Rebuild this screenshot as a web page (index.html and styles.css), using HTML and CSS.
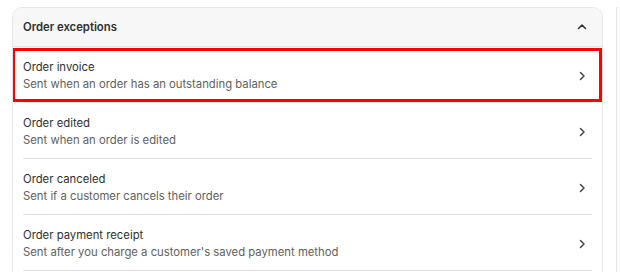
FILE: index.html
```html
<!DOCTYPE html>
<html>
<head>
<meta charset="utf-8">
<link rel="stylesheet" href="styles.css">
</head>
<body>
<div class="page">
  <section class="card">
    <header class="card-head">
      <span class="head-title">Order exceptions</span>
      <svg class="chev" viewBox="0 0 16 16"><path d="M4.5 9.5 8 6l3.5 3.5" fill="none" stroke="#303030" stroke-width="1.5" stroke-linecap="round" stroke-linejoin="round"/></svg>
    </header>
    <div class="list">
      <div class="row">
        <div class="text">
          <div class="title">Order invoice</div>
          <div class="sub">Sent when an order has an outstanding balance</div>
        </div>
        <svg class="chev" viewBox="0 0 16 16"><path d="M6.5 4.5 10 8l-3.5 3.5" fill="none" stroke="#4a4a4a" stroke-width="1.5" stroke-linecap="round" stroke-linejoin="round"/></svg>
      </div>
      <div class="row">
        <div class="text">
          <div class="title">Order edited</div>
          <div class="sub">Sent when an order is edited</div>
        </div>
        <svg class="chev" viewBox="0 0 16 16"><path d="M6.5 4.5 10 8l-3.5 3.5" fill="none" stroke="#4a4a4a" stroke-width="1.5" stroke-linecap="round" stroke-linejoin="round"/></svg>
      </div>
      <div class="row">
        <div class="text">
          <div class="title">Order canceled</div>
          <div class="sub">Sent if a customer cancels their order</div>
        </div>
        <svg class="chev" viewBox="0 0 16 16"><path d="M6.5 4.5 10 8l-3.5 3.5" fill="none" stroke="#4a4a4a" stroke-width="1.5" stroke-linecap="round" stroke-linejoin="round"/></svg>
      </div>
      <div class="row">
        <div class="text">
          <div class="title">Order payment receipt</div>
          <div class="sub">Sent after you charge a customer's saved payment method</div>
        </div>
        <svg class="chev" viewBox="0 0 16 16"><path d="M6.5 4.5 10 8l-3.5 3.5" fill="none" stroke="#4a4a4a" stroke-width="1.5" stroke-linecap="round" stroke-linejoin="round"/></svg>
      </div>
    </div>
    <div class="highlight"></div>
  </section>
  <div class="rail"></div>
</div>
</body>
</html>
```
FILE: styles.css
```css
html, body {
  margin: 0;
  padding: 0;
  background: #ffffff;
  overflow: hidden;
  height: 272px;
}
.page {
  display: flex;
  padding: 7px 0 0 12px;
  font-family: Inter, "Noto Sans", sans-serif;
  font-size: 11.3px;
  color: #303030;
}
.card {
  position: relative;
  width: 589px;
  height: 300px;
  border: 1px solid #e6e6e6;
  border-radius: 10px;
  background: #ffffff;
  overflow: hidden;
  flex: none;
}
.card-head {
  display: flex;
  align-items: center;
  justify-content: space-between;
  height: 38px;
  padding: 0 10px;
  background: #f7f7f7;
  border-bottom: 1px solid #e3e3e3;
}
.head-title {
  font-weight: 600;
  color: #303030;
}
.chev {
  width: 16px;
  height: 16px;
  flex: none;
  margin-right: 2px;
}
.row {
  box-sizing: border-box;
  display: flex;
  align-items: center;
  justify-content: space-between;
  height: 56px;
  margin: 0 10px;
  border-bottom: 1px solid #e3e3e3;
  padding-top: 2px;
}
.text {
  display: flex;
  flex-direction: column;
}
.title {
  line-height: 17px;
  color: #303030;
}
.sub {
  line-height: 17px;
  color: #616161;
}
.highlight {
  position: absolute;
  left: -1px;
  top: 40px;
  width: 584px;
  height: 48px;
  border: 3px solid #ff0000;
  pointer-events: none;
}
.rail {
  margin-left: 13px;
  width: 6px;
  height: 272px;
  border-left: 1px solid #e8e8e8;
  background: #fafafa;
}
```
